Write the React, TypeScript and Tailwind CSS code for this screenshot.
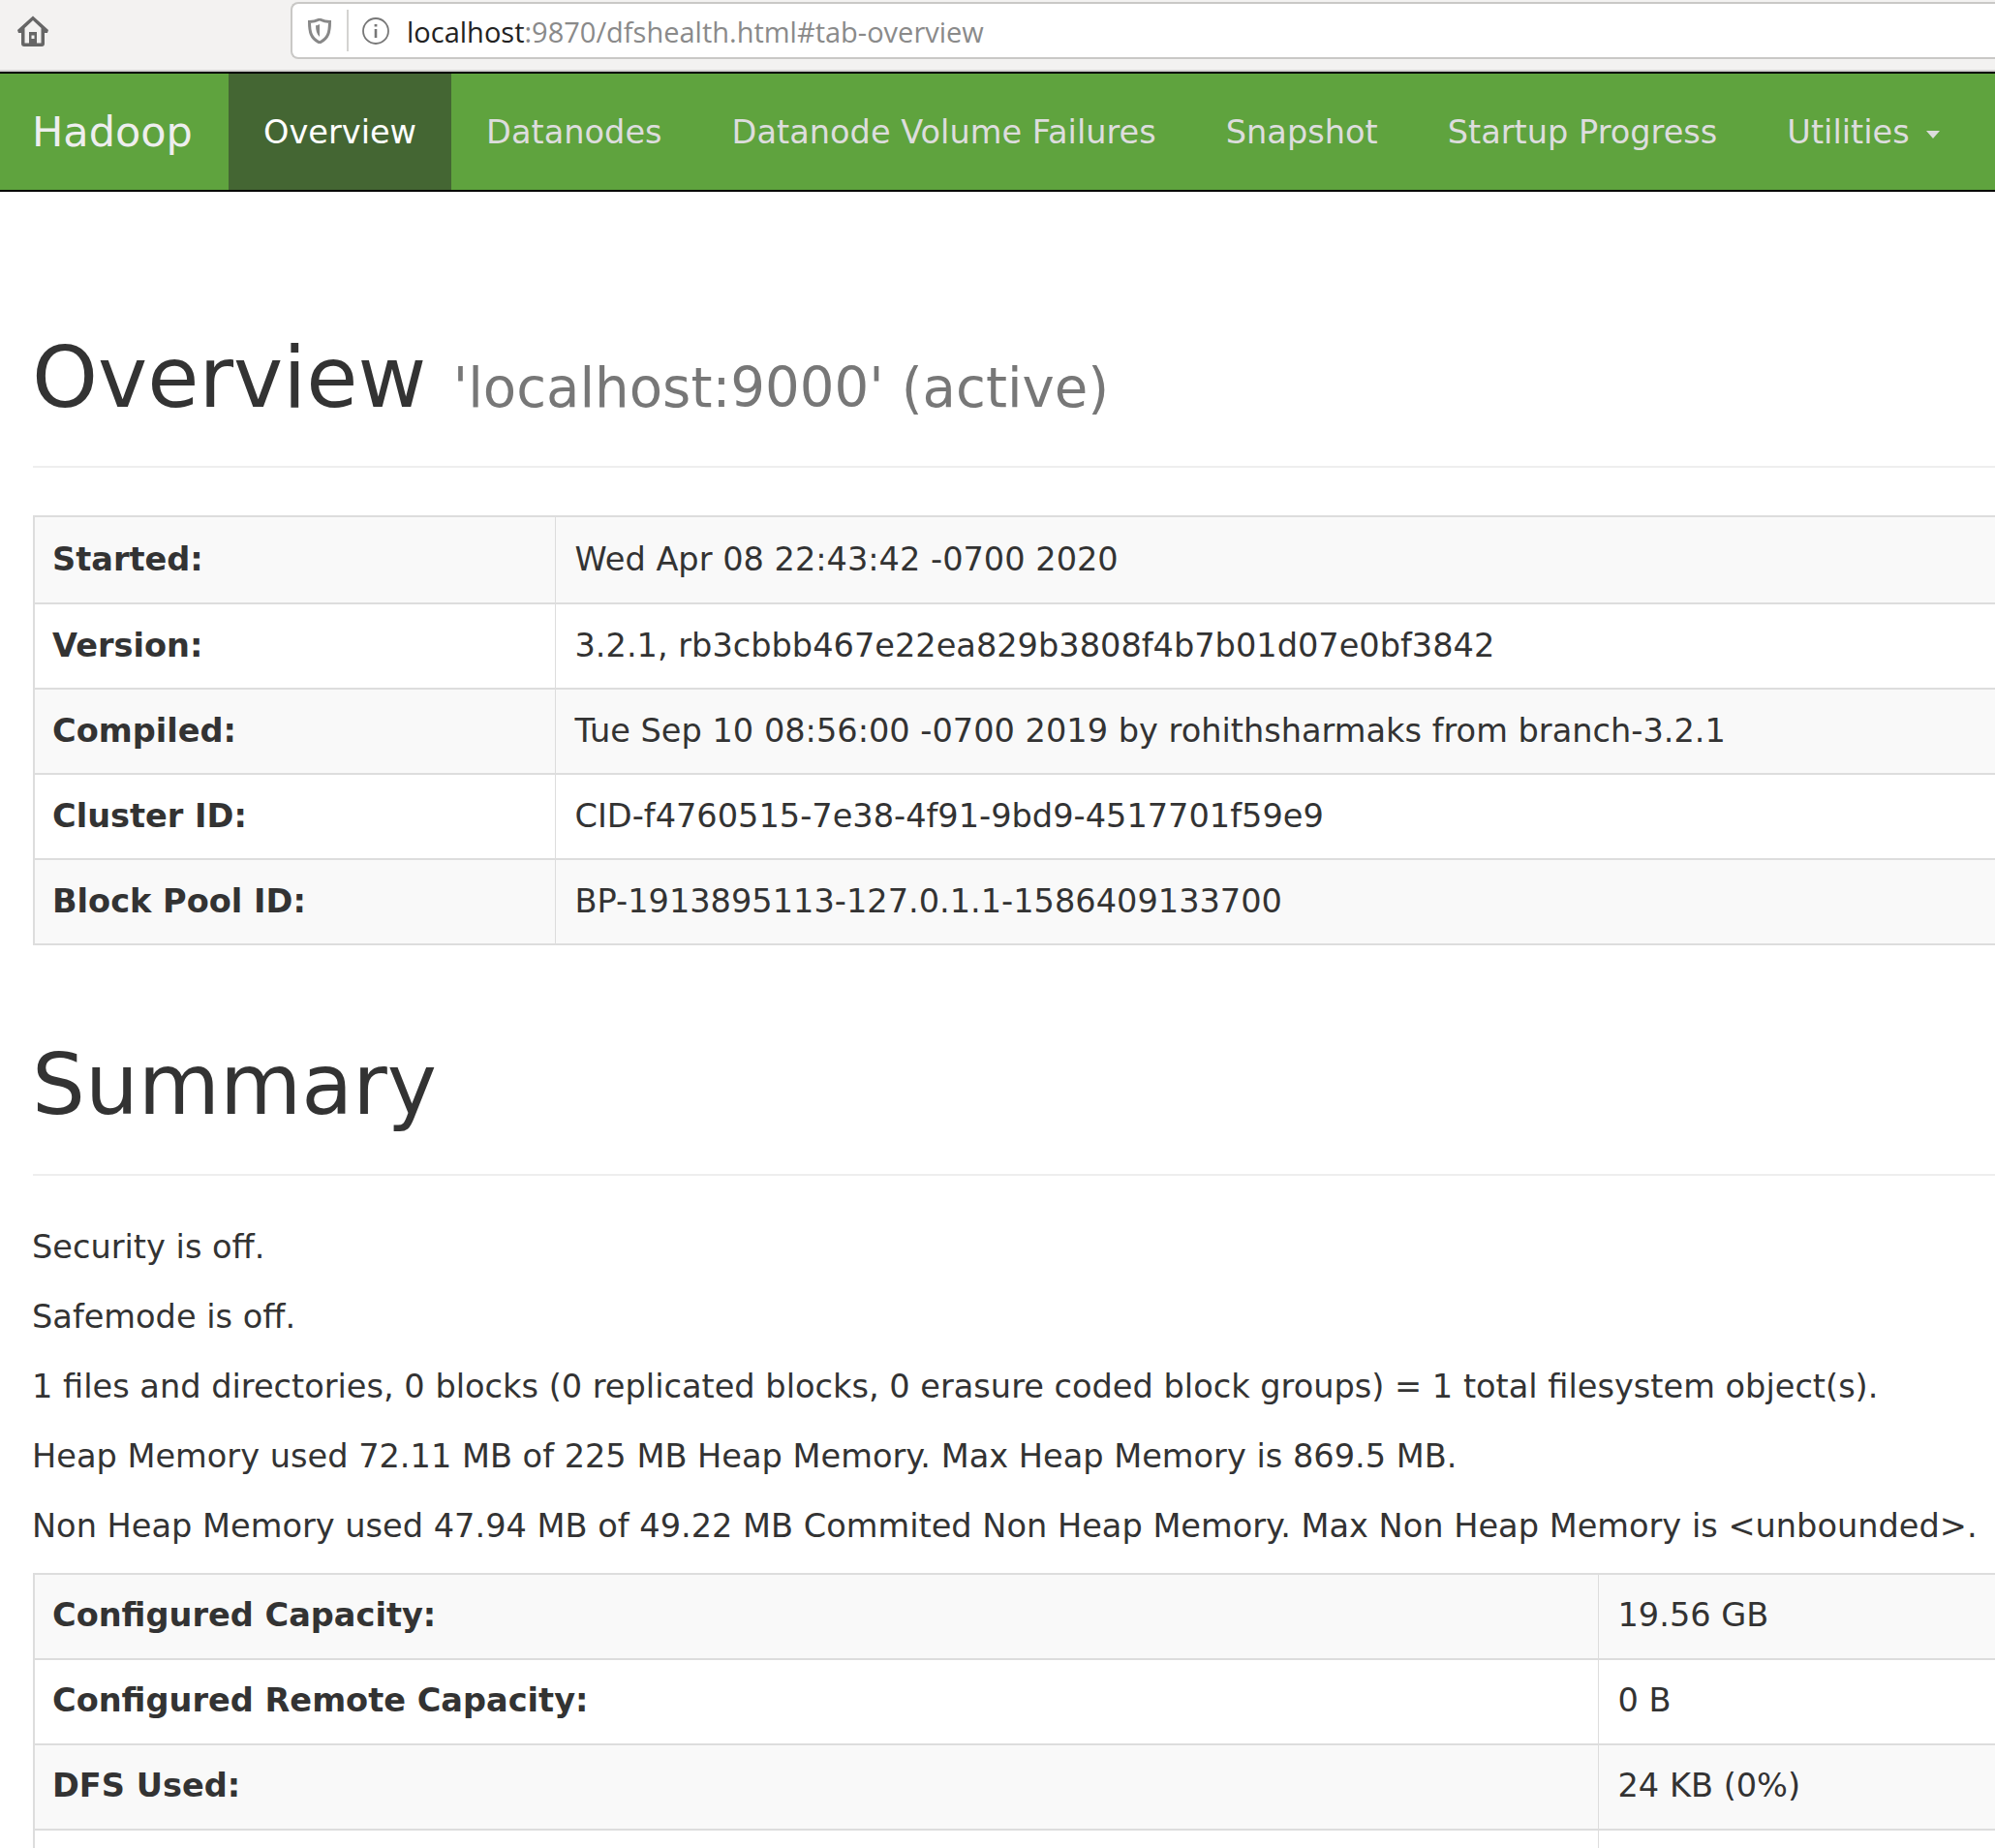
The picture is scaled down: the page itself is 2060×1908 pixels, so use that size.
const links = ["Datanodes", "Datanode Volume Failures", "Snapshot", "Startup Progress"];

const overviewRows = [
  ["Started:", "Wed Apr 08 22:43:42 -0700 2020"],
  ["Version:", "3.2.1, rb3cbbb467e22ea829b3808f4b7b01d07e0bf3842"],
  ["Compiled:", "Tue Sep 10 08:56:00 -0700 2019 by rohithsharmaks from branch-3.2.1"],
  ["Cluster ID:", "CID-f4760515-7e38-4f91-9bd9-4517701f59e9"],
  ["Block Pool ID:", "BP-1913895113-127.0.1.1-1586409133700"],
];

const summaryLines = [
  "Security is off.",
  "Safemode is off.",
  "1 files and directories, 0 blocks (0 replicated blocks, 0 erasure coded block groups) = 1 total filesystem object(s).",
  "Heap Memory used 72.11 MB of 225 MB Heap Memory. Max Heap Memory is 869.5 MB.",
  "Non Heap Memory used 47.94 MB of 49.22 MB Commited Non Heap Memory. Max Non Heap Memory is <unbounded>.",
];

const capacityRows = [
  ["Configured Capacity:", "19.56 GB"],
  ["Configured Remote Capacity:", "0 B"],
  ["DFS Used:", "24 KB (0%)"],
  ["", ""],
];

function InfoTable({ rows, labelWidth, rowClass, cellPad }: { rows: string[][]; labelWidth: string; rowClass: string; cellPad: string }) {
  return (
    <table className="w-[2200px] table-fixed border-collapse border-t-2 border-l-2 border-[#ddd]">
      <colgroup>
        <col className={labelWidth} />
        <col />
      </colgroup>
      <tbody>
        {rows.map((row, index) => (
          <tr key={index} className={`h-[88px] border-b-2 border-[#ddd] ${rowClass} ${index % 2 === 0 ? "bg-[#f9f9f9]" : "bg-white"}`}>
            <th className={`border-r border-[#ddd] pl-[18px] text-left font-bold ${cellPad}`}>{row[0]}</th>
            <td className={`pl-[20px] ${cellPad}`}>{row[1]}</td>
          </tr>
        ))}
      </tbody>
    </table>
  );
}

export default function App() {
  return (
    <div className="h-[1908px] w-[2060px] overflow-hidden bg-white font-['DejaVu_Sans',sans-serif] text-[33.6px] leading-[47.7px] text-[#333]">
      <div className="flex h-[74px] items-start border-b-2 border-[#d4d3d1] bg-[#f3f2f1]">
        <svg className="ml-[18px] mt-[16px] h-[32px] w-[32px]" viewBox="0 0 32 32" fill="#666">
          <path d="M16 0.5 L32 15 L31 18 L28 18 L28 29 Q28 32 25 32 L7 32 Q4 32 4 29 L4 18 L1 18 L0 15 Z M16 5 L7.5 13 L7.5 28.5 L12 28.5 L12 17 L20 17 L20 28.5 L24.5 28.5 L24.5 13 Z M14.5 20.5 L14.5 24 L17.5 24 L17.5 20.5 Z" fillRule="evenodd" />
        </svg>
        <div className="ml-[250px] mt-[2px] flex h-[59px] flex-1 items-center rounded-l-[8px] border-2 border-r-0 border-[#c9c8c6] bg-white pl-[16px]">
          <svg className="h-[26px] w-[24px]" viewBox="0 0 24 26">
            <path d="M12 1 C8 3 5 3.5 1.5 3.5 C1.5 14 3 21 12 25 C21 21 22.500 14 22.500 3.500 C19 3.500 16 3 12 1 Z" fill="none" stroke="#888" strokeWidth="3" />
            <path d="M12 6 C10.500 7 9.500 7.200 8 7.300 C8 12 9 16.500 12 19 Z" fill="#888" />
          </svg>
          <div className="ml-[16px] h-[43px] w-[2px] bg-[#d4d3d1]" />
          <svg className="ml-[14px] h-[28px] w-[28px]" viewBox="0 0 28 28" fill="none" stroke="#777" strokeWidth="1.800">
            <circle cx="14" cy="14" r="13" />
            <path d="M14 12 L14 21" strokeWidth="2.600" />
            <path d="M14 7 L14 9.500" strokeWidth="2.800" />
          </svg>
          <span className="ml-[18px] mt-[2px] font-['Open_Sans',sans-serif] text-[29px] leading-none text-[#8a8a8a]">
            <span className="text-[#222]">localhost</span>:9870/dfshealth.html#tab-overview
          </span>
        </div>
      </div>

      <nav className="flex h-[124px] items-center border-y-2 border-black bg-[#5fa33e] text-[#ddd]">
        <a className="w-[236px] pl-[33px] pt-[2px] text-[43px] text-[#eee]">Hadoop</a>
        <a className="flex h-full items-center bg-[#446633] px-[36px] pt-[2px] text-white">Overview</a>
        {links.map((link) => (
          <a key={link} className="px-[36px] pt-[2px]">{link}</a>
        ))}
        <a className="flex items-center pl-[36px] pt-[2px]">
          Utilities
          <span className="ml-[17px] mt-[4px] h-0 w-0 border-x-[7px] border-t-[8px] border-x-transparent border-t-[#ddd]" />
        </a>
      </nav>

      <main className="pl-[34px]">
        <div className="border-b-2 border-[#eee] pb-[43px] pt-[145px]">
          <h1 className="-ml-[1px] text-[86.5px] leading-[94.5px]">
            Overview <small className="text-[56.2px] leading-none text-[#777]">'localhost:9000' (active)</small>
          </h1>
        </div>
        <div className="mt-[49px]">
          <InfoTable rows={overviewRows} labelWidth="w-[538px]" rowClass="first:h-[90px]" cellPad="pt-0" />
        </div>

        <div className="mt-[97px] border-b-2 border-[#eee] pb-[45px]">
          <h1 className="-ml-[1px] text-[86.5px] leading-[94.5px]">Summary</h1>
        </div>
        <div className="-ml-[1px] mt-[50px] flex flex-col gap-[24.3px] whitespace-nowrap">
          {summaryLines.map((line) => (
            <p key={line}>{line}</p>
          ))}
        </div>
        <div className="mt-[24px]">
          <InfoTable rows={capacityRows} labelWidth="w-[1615px]" rowClass="" cellPad="pb-[2px]" />
        </div>
      </main>
    </div>
  );
}
